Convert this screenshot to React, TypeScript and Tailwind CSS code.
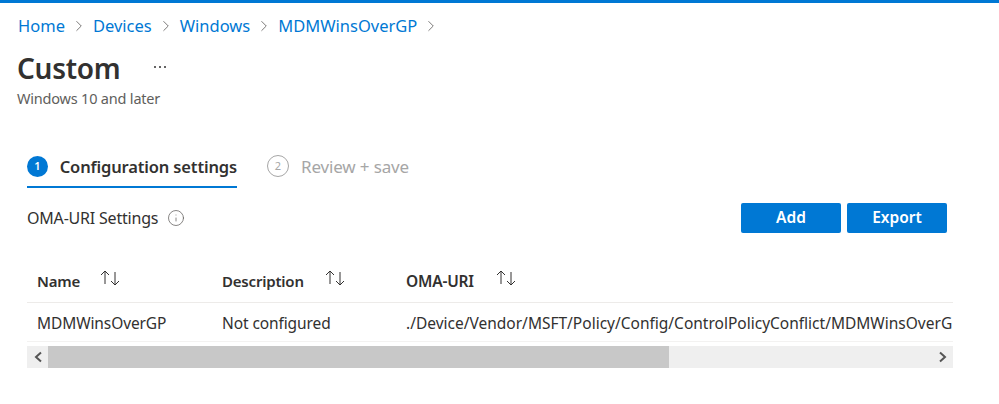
import React from 'react';
import { ChevronRight, Info } from 'lucide-react';

const SortIcon = () => (
  <svg width="22" height="18" viewBox="0 0 22 18" fill="none" stroke="#323130" strokeWidth="1" className="shrink-0">
    <path d="M6 15V2M2 6l4-4 4 4" />
    <path d="M16 3v13M12 12l4 4 4-4" />
  </svg>
);

const crumbs = ['Home', 'Devices', 'Windows', 'MDMWinsOverGP'];

export default function App() {
  return (
    <div className="w-[999px] h-[404px] bg-white overflow-hidden font-['Noto_Sans',sans-serif] text-[#323130]">
      <div className="h-[3px] bg-[#0078d4]" />

      {/* breadcrumb */}
      <div className="flex items-center h-[24px] mt-[11px] pl-[18px] text-[16.5px] text-[#0078d4]">
        {crumbs.map((c) => (
          <React.Fragment key={c}>
            <span>{c}</span>
            <ChevronRight className="w-[18px] h-[18px] mx-[5px] text-[#605e5c]" strokeWidth={1.1} />
          </React.Fragment>
        ))}
      </div>

      {/* title */}
      <div className="flex items-center pl-[17px] h-[40px] mt-[10px]">
        <h1 className="text-[28px] font-semibold leading-[40px] tracking-[-0.3px]">Custom</h1>
        <span className="ml-[34px] mb-[2px] flex gap-[3px]">
          <i className="w-[2px] h-[2px] rounded-full bg-[#323130]" />
          <i className="w-[2px] h-[2px] rounded-full bg-[#323130]" />
          <i className="w-[2px] h-[2px] rounded-full bg-[#323130]" />
        </span>
      </div>
      <p className="pl-[17px] text-[14.5px] leading-[20px] text-[#605e5c] tracking-[-0.2px]">Windows 10 and later</p>

      {/* steps */}
      <div className="flex ml-[27px] mt-[47px] h-[34px]">
        <div className="flex items-start gap-[12px] w-[210px] h-[31px] border-b-[2px] border-[#0078d4] box-content">
          <span className="w-[21px] h-[21px] mt-[1px] rounded-full bg-[#0078d4] text-white text-[11px] font-semibold flex items-center justify-center">1</span>
          <span className="text-[16.5px] font-semibold leading-[24px] tracking-[-0.15px] whitespace-nowrap">Configuration settings</span>
        </div>
        <div className="flex items-start gap-[12px] ml-[30px]">
          <span className="w-[22px] h-[22px] rounded-full border border-[#a6a6a6] text-[#a6a6a6] text-[11px] flex items-center justify-center">2</span>
          <span className="text-[17px] leading-[24px] text-[#a6a6a6] tracking-[-0.15px] whitespace-nowrap">Review + save</span>
        </div>
      </div>

      {/* toolbar */}
      <div className="flex items-center justify-between ml-[27px] w-[920px] mt-[14px] h-[30px]">
        <div className="flex items-center gap-[9px] text-[16px] tracking-[-0.2px]">
          <span>OMA-URI Settings</span>
          <Info className="w-[18px] h-[18px] text-[#605e5c]" strokeWidth={1} />
        </div>
        <div className="flex gap-[6px]">
          <button className="w-[100px] h-[30px] bg-[#0078d4] text-white text-[15.5px] font-semibold rounded-[2px]">Add</button>
          <button className="w-[100px] h-[30px] bg-[#0078d4] text-white text-[15.5px] font-semibold rounded-[2px]">Export</button>
        </div>
      </div>

      {/* table */}
      <div className="ml-[27px] w-[926px] mt-[30px] overflow-hidden">
        <div className="flex h-[40px] border-b border-[#edebe9] text-[15px] font-semibold tracking-[-0.2px] whitespace-nowrap">
          <div className="w-[185px] pl-[10px] flex gap-[19px] pt-[6px]">
            <span className="leading-[24px]">Name</span>
            <SortIcon />
          </div>
          <div className="w-[184px] pl-[10px] flex gap-[20px] pt-[6px]">
            <span className="leading-[24px]">Description</span>
            <SortIcon />
          </div>
          <div className="flex-1 pl-[10px] flex gap-[21px] pt-[6px]">
            <span className="leading-[24px] text-[15.5px]">OMA-URI</span>
            <SortIcon />
          </div>
        </div>
        <div className="flex h-[39px] items-center pt-[3px] border-b border-[#f3f2f1] text-[15.5px] tracking-[-0.1px] whitespace-nowrap">
          <div className="w-[185px] pl-[10px]">MDMWinsOverGP</div>
          <div className="w-[184px] pl-[10px]">Not configured</div>
          <div className="flex-1 pl-[10px] overflow-hidden tracking-normal">./Device/Vendor/MSFT/Policy/Config/ControlPolicyConflict/MDMWinsOverGP</div>
        </div>

        {/* scrollbar */}
        <div className="flex items-center h-[22px] mt-[4px] bg-[#efefef]">
          <div className="w-[21px] flex justify-center">
            <svg width="10" height="12" viewBox="0 0 10 12" fill="none" stroke="#555" strokeWidth="2"><path d="M8 1.5L3 6l5 4.5" /></svg>
          </div>
          <div className="w-[621px] h-full bg-[#c8c8c8]" />
          <div className="flex-1" />
          <div className="w-[21px] flex justify-center">
            <svg width="10" height="12" viewBox="0 0 10 12" fill="none" stroke="#555" strokeWidth="2"><path d="M2 1.5L7 6l-5 4.5" /></svg>
          </div>
        </div>
      </div>
    </div>
  );
}
